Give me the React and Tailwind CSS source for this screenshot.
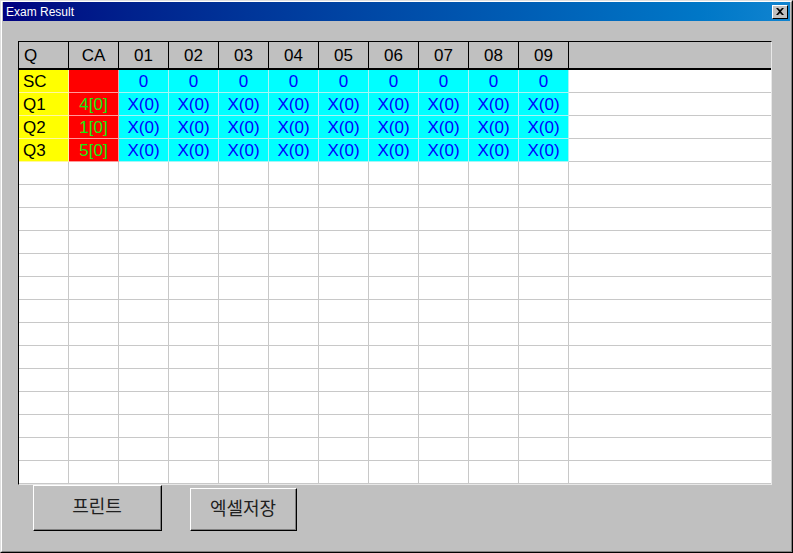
import React from 'react';

const cols = ['01', '02', '03', '04', '05', '06', '07', '08', '09'];

const rows = [
  { q: 'SC', ca: '', vals: cols.map(() => '0') },
  { q: 'Q1', ca: '4[0]', vals: cols.map(() => 'X(0)') },
  { q: 'Q2', ca: '1[0]', vals: cols.map(() => 'X(0)') },
  { q: 'Q3', ca: '5[0]', vals: cols.map(() => 'X(0)') },
];

const EMPTY_ROWS = 14;

function HeaderRow() {
  return (
    <div className="flex h-[28px] border-b-2 border-black bg-[#c0c0c0] text-[17px] text-black">
      <div className="w-[50px] shrink-0 border-r border-black pl-[5px] leading-[27px]">Q</div>
      <div className="w-[50px] shrink-0 border-r border-black text-center leading-[27px]">CA</div>
      {cols.map((c) => (
        <div key={c} className="w-[50px] shrink-0 border-r border-black text-center leading-[27px]">
          {c}
        </div>
      ))}
      <div className="flex-1" />
    </div>
  );
}

function DataRow({ row }) {
  return (
    <div className="flex h-[23px] text-[17px] leading-[24px]">
      <div className="w-[50px] shrink-0 border-r border-b border-[#fff7a0] bg-[#ffff00] pl-[4px] text-black">
        {row.q}
      </div>
      <div className="w-[50px] shrink-0 border-r border-b border-[#ff9a9a] bg-[#ff0000] text-center text-[#10ee10]">
        {row.ca}
      </div>
      {row.vals.map((v, i) => (
        <div
          key={i}
          className="w-[50px] shrink-0 border-r border-b border-[#a8f4f4] bg-[#00ffff] text-center text-[#0000ff]"
        >
          {v}
        </div>
      ))}
      <div className="flex-1 border-b border-[#c8c8c8] bg-white" />
    </div>
  );
}

function EmptyRow() {
  return (
    <div className="flex h-[23px] bg-white">
      {Array.from({ length: 11 }).map((_, i) => (
        <div key={i} className="w-[50px] shrink-0 border-r border-b border-[#c8c8c8]" />
      ))}
      <div className="flex-1 border-b border-[#c8c8c8]" />
    </div>
  );
}

function Button({ label, className }) {
  return (
    <div className={`flex items-center justify-center border-t border-l border-white border-r border-b border-r-black border-b-black bg-[#c0c0c0] ${className}`}>
      <div className="flex h-full w-full items-center justify-center border-r border-b border-[#808080] text-[18px] text-[#202020]">
        {label}
      </div>
    </div>
  );
}

export default function App() {
  return (
    <div
      className="w-[793px] h-[553px] bg-[#c0c0c0] border-t border-l border-[#dfdfdf] border-r border-b border-r-black border-b-black overflow-hidden"
      style={{ fontFamily: '"Liberation Sans", Arial, "Noto Sans CJK KR", sans-serif' }}
    >
      <div className="h-full w-full border-t border-l border-white border-r border-b border-r-[#808080] border-b-[#808080] flex flex-col">
        {/* Title bar */}
        <div className="mx-[1px] flex h-[19px] items-center justify-between bg-gradient-to-r from-[#000080] to-[#1084d0] pl-[3px] pr-[2px]">
          <span className="text-[12px] text-white leading-none">Exam Result</span>
          <div className="flex h-[14px] w-[16px] items-center justify-center border-t border-l border-white border-r border-b border-r-black border-b-black bg-[#c0c0c0]">
            <svg width="8" height="7" viewBox="0 0 8 7">
              <path d="M0 0h2l2 2 2-2h2L5 3.5 8 7H6L4 5 2 7H0l3-3.5z" fill="#000" />
            </svg>
          </div>
        </div>

        {/* Grid */}
        <div className="ml-[16px] mt-[20px] h-[444px] w-[754px] border-t border-l border-black border-r border-b border-r-[#e8e8e8] border-b-[#e8e8e8] bg-white overflow-hidden">
          <HeaderRow />
          {rows.map((r) => (
            <DataRow key={r.q} row={r} />
          ))}
          {Array.from({ length: EMPTY_ROWS }).map((_, i) => (
            <EmptyRow key={i} />
          ))}
        </div>

        {/* Buttons */}
        <div className="flex items-start">
          <Button label="프린트" className="ml-[31px] h-[46px] w-[129px]" />
          <Button label="엑셀저장" className="ml-[28px] mt-[3px] h-[43px] w-[107px]" />
        </div>
      </div>
    </div>
  );
}
